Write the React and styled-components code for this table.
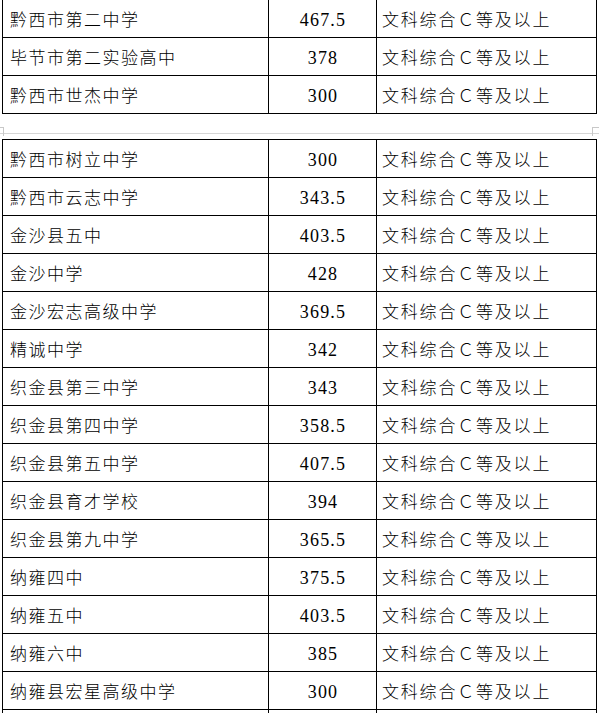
import React from 'react';
import styled, { createGlobalStyle } from 'styled-components';

const GlobalStyle = createGlobalStyle`
  html, body {
    margin: 0;
    padding: 0;
    background: #fff;
    overflow: hidden;
  }
  body {
    font-family: "Liberation Serif", "Noto Sans CJK SC", serif;
    color: #000;
  }
`;

const REQ = '文科综合Ｃ等及以上';

const firstPage = [
  ['黔西市第二中学', '467.5'],
  ['毕节市第二实验高中', '378'],
  ['黔西市世杰中学', '300'],
];

const secondPage = [
  ['黔西市树立中学', '300'],
  ['黔西市云志中学', '343.5'],
  ['金沙县五中', '403.5'],
  ['金沙中学', '428'],
  ['金沙宏志高级中学', '369.5'],
  ['精诚中学', '342'],
  ['织金县第三中学', '343'],
  ['织金县第四中学', '358.5'],
  ['织金县第五中学', '407.5'],
  ['织金县育才学校', '394'],
  ['织金县第九中学', '365.5'],
  ['纳雍四中', '375.5'],
  ['纳雍五中', '403.5'],
  ['纳雍六中', '385'],
  ['纳雍县宏星高级中学', '300'],
  ['', ''],
];

export default function App() {
  return (
    <>
      <GlobalStyle />
      <StPage>
        <StTable>
          {firstPage.map(([name, score]) => (
            <ScoreRow key={name} name={name} score={score} />
          ))}
        </StTable>

        <StPageBreak>
          <StCorner side="left" />
          <StCorner side="right" />
        </StPageBreak>

        <StTable $top>
          {secondPage.map(([name, score], i) => (
            <ScoreRow key={name || i} name={name} score={score} empty={!name} />
          ))}
        </StTable>
      </StPage>
    </>
  );
}

function ScoreRow({ name, score, empty }) {
  return (
    <StRow>
      <StNameCell>{name}</StNameCell>
      <StScoreCell>{score}</StScoreCell>
      <StReqCell>{empty ? '' : REQ}</StReqCell>
    </StRow>
  );
}

const StPage = styled.div`
  width: 599px;
  display: flex;
  flex-direction: column;
`;

const StTable = styled.div`
  margin-left: 2px;
  width: 595px;
  box-sizing: border-box;
  border-left: 1px solid #000;
  border-right: 1px solid #000;
  border-top: ${props => (props.$top ? '1px solid #000' : 'none')};
  display: flex;
  flex-direction: column;
`;

const StRow = styled.div`
  display: grid;
  grid-template-columns: 266px 108px 1fr;
  height: 38px;
  box-sizing: border-box;
  border-bottom: 1px solid #000;
`;

const StCell = styled.div`
  display: flex;
  align-items: center;
  box-sizing: border-box;
  white-space: nowrap;
  overflow: hidden;
`;

const StNameCell = styled(StCell)`
  padding-left: 7px;
  border-right: 1px solid #000;
  font-family: "Noto Sans CJK SC", sans-serif;
  font-size: 17px;
  font-weight: 300;
  letter-spacing: 1.5px;
`;

const StScoreCell = styled(StCell)`
  justify-content: center;
  padding: 3px 0 0 1px;
  border-right: 1px solid #000;
  font-family: "Liberation Serif", serif;
  font-size: 18px;
  letter-spacing: 1.2px;
`;

const StReqCell = styled(StCell)`
  padding-left: 5px;
  font-family: "Noto Sans CJK SC", sans-serif;
  font-size: 17px;
  font-weight: 300;
  letter-spacing: 1.8px;
`;

const StPageBreak = styled.div`
  position: relative;
  height: 25px;
  box-sizing: border-box;
  padding-top: 19px;

  &::before {
    content: '';
    display: block;
    height: 1px;
    background: #d6d6d6;
  }
`;

const StCorner = styled.span`
  position: absolute;
  top: 13px;
  width: ${props => (props.side === 'left' ? '3px' : '6px')};
  height: 8px;
  border-top: 1px solid #c8c8c8;
  ${props =>
    props.side === 'left'
      ? 'left: 0; border-right: 1px solid #c8c8c8;'
      : 'left: 592px; border-left: 1px solid #c8c8c8;'}
`;
